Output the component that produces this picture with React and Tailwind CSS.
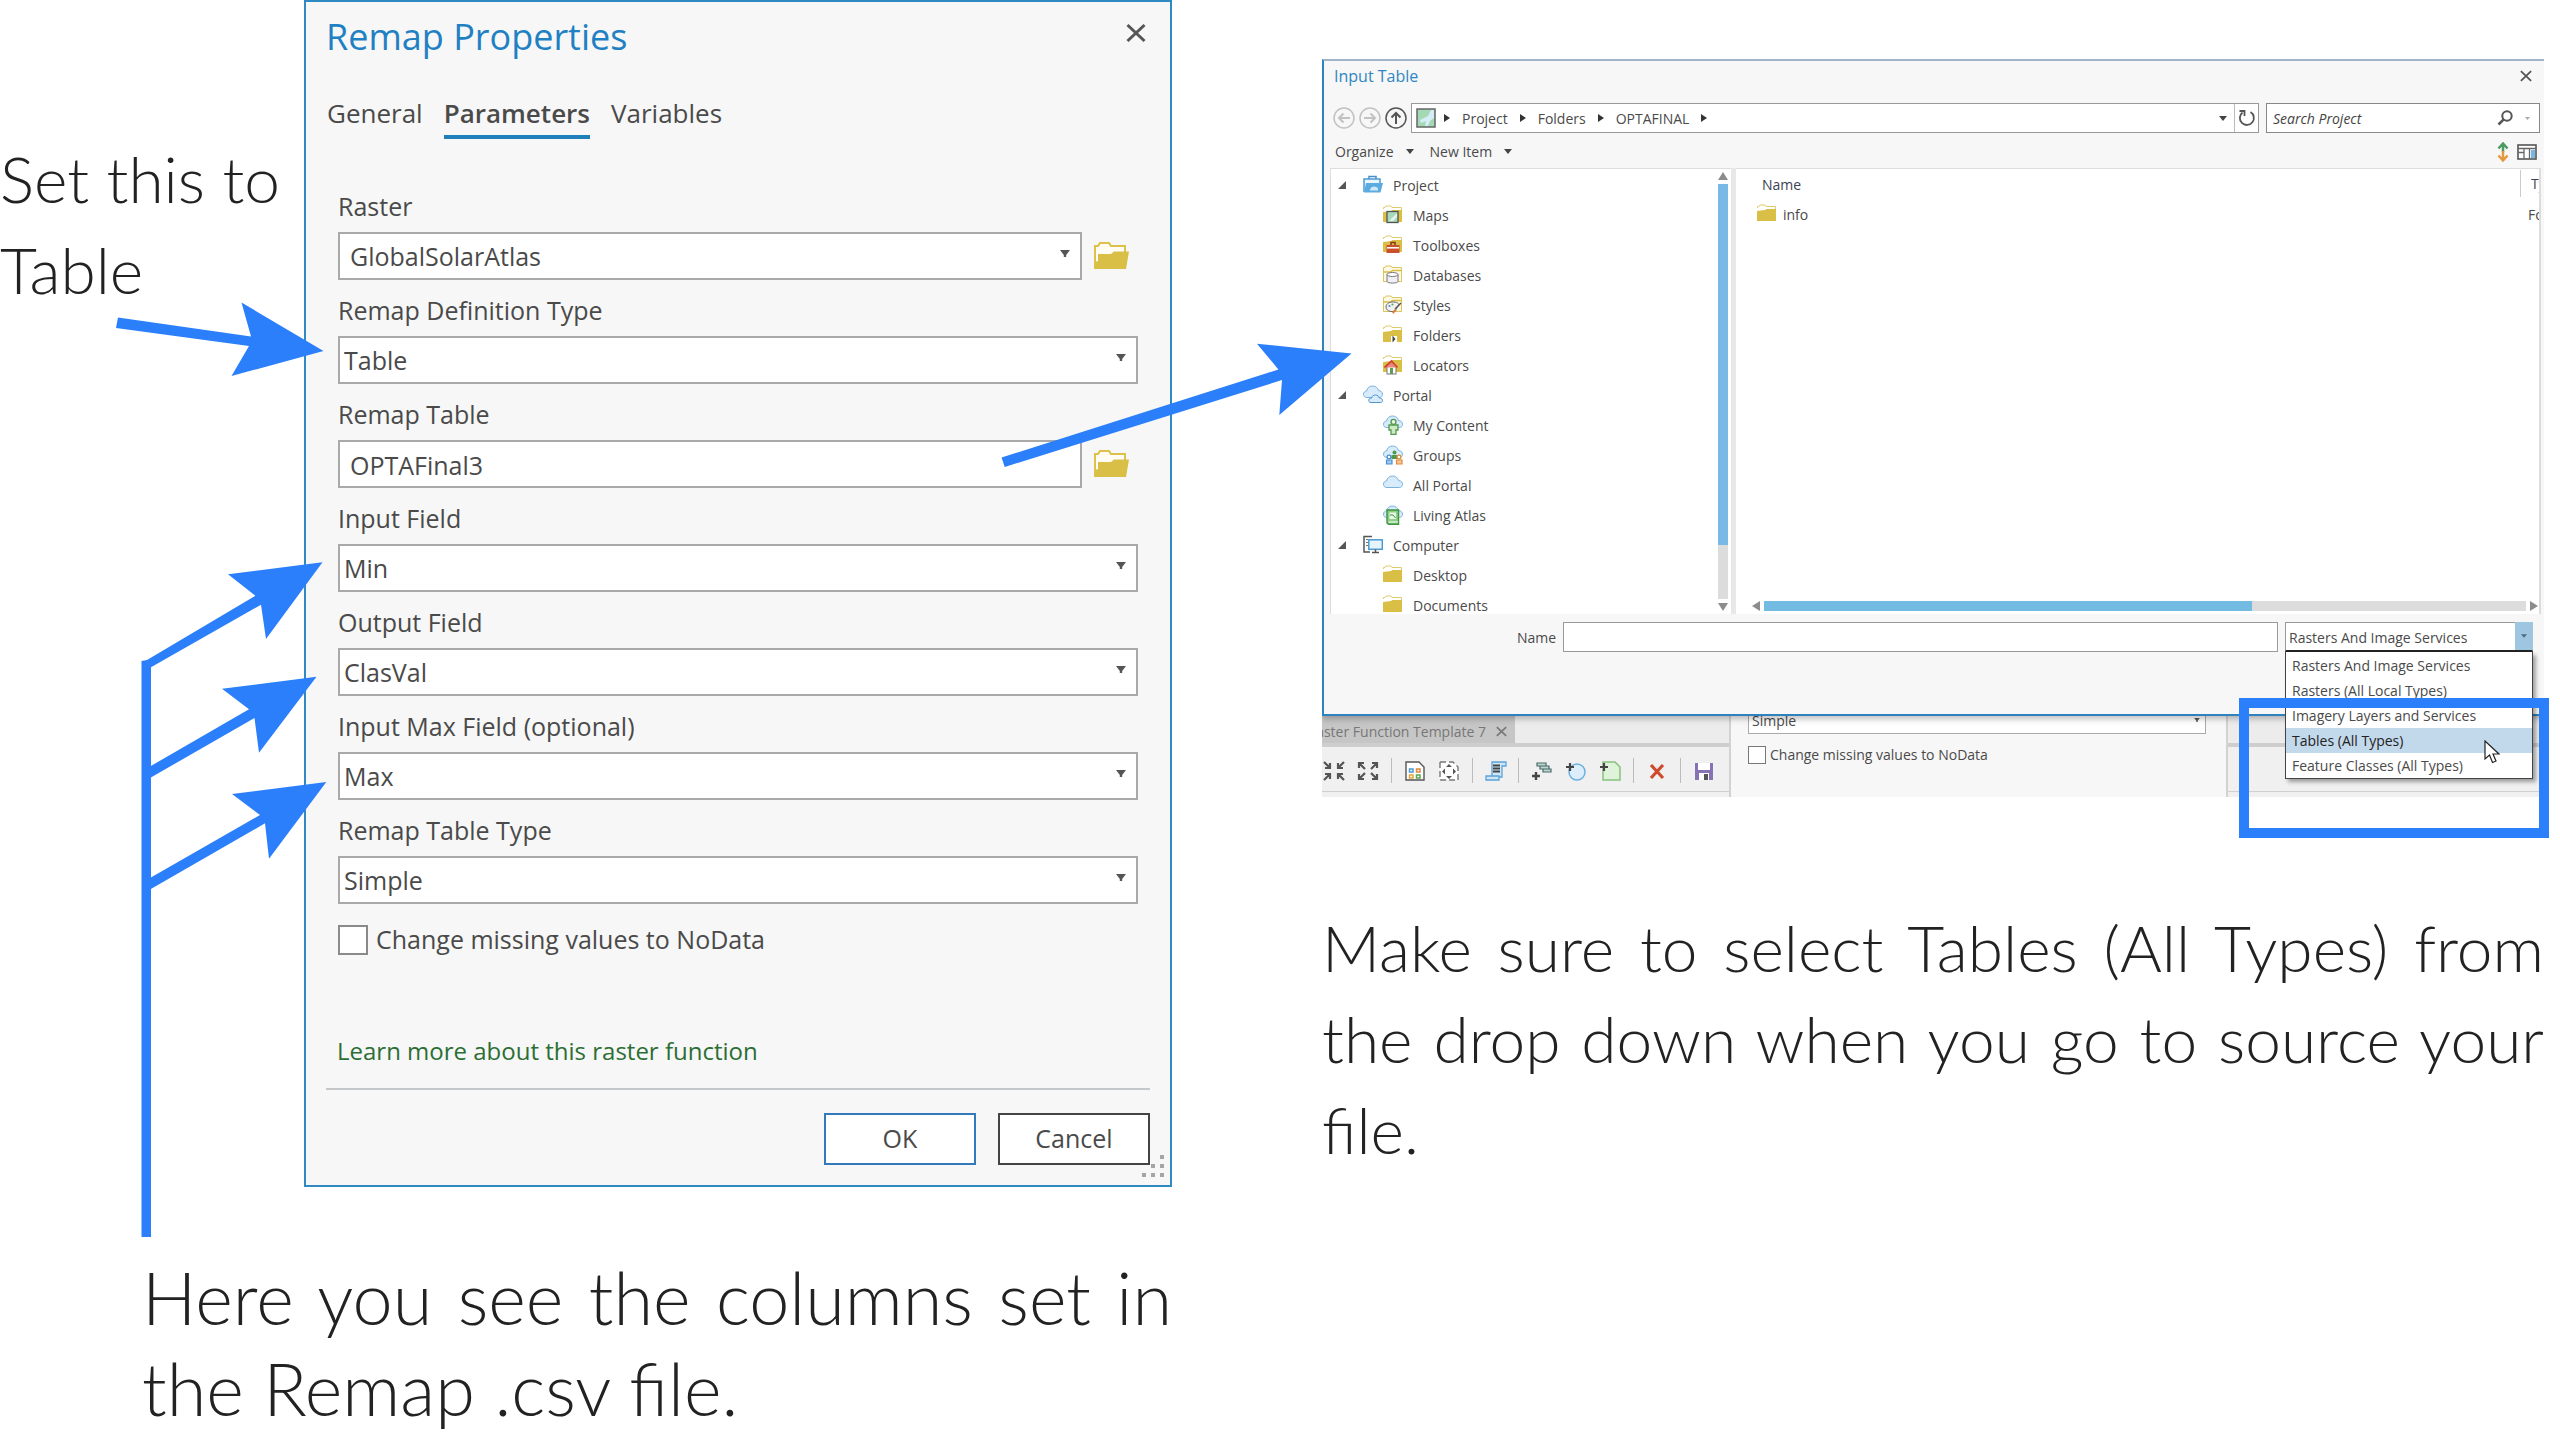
import { useState } from 'react'

const uiFont = "font-['Open_Sans','Noto_Sans',sans-serif]"
const noteFont = "font-['Lato','Open_Sans',sans-serif] font-light"

const DownTriangle = ({ className = '' }) => (
  <svg viewBox="0 0 10 7" aria-hidden="true" className={className}>
    <path d="M0 0H10L6.2 5V7H3.8V5Z" fill="currentColor" />
  </svg>
)

const Triangle = ({ points = '0,0 10,0 5,6', box = '0 0 10 6', className = '' }) => (
  <svg viewBox={box} aria-hidden="true" className={className}>
    <polygon points={points} fill="currentColor" />
  </svg>
)

const CloseMark = ({ className = '' }) => (
  <svg viewBox="0 0 20 20" aria-hidden="true" className={className}>
    <path d="M1.5 2L18.5 18M18.5 2L1.5 18" stroke="currentColor" strokeWidth="3" fill="none" />
  </svg>
)

const OpenFolder = () => (
  <svg viewBox="0 0 36 28" aria-hidden="true" className="h-7 w-9">
    <path d="M1 27V4H4L6 1H15L17 4H31V10" fill="#fffdf3" stroke="#dcc14a" strokeWidth="2" />
    <path d="M4 12H17L20 9.5H35L32 27H1V20L4 19Z" fill="#d9bf45" />
  </svg>
)

const FolderBase = () => (
  <>
    <path d="M0.5 4V2.5H2L3 1H8L9 2.5H18.5V5" fill="#fff" stroke="#e0cb6a" />
    <path d="M0 7L8 6L9.5 5H19V17H0Z" fill="#d9bf45" />
  </>
)

// folder with a pale face, used where a symbol covers it
const PaleFolder = () => (
  <>
    <path d="M0.5 16.5V2.5H2L3 1H8L9 2.5H18.5V16.5Z" fill="#fdf9e6" stroke="#dcc65c" />
    <path d="M0.5 7H8L9.5 5.5H18.5" fill="none" stroke="#d9bf45" strokeWidth="1.6" />
  </>
)

const CloudBase = () => (
  <path d="M4 12.5C1.5 12.5 0.5 11 0.5 9.2C0.5 7.2 2 6 3.6 6C4 3 6.5 1 9.5 1C12.5 1 15 3 15.5 5.6C18 5.6 19.5 7.2 19.5 9.3C19.5 11.3 18 12.5 16.5 12.5Z"
    fill="#d8ebfa" stroke="#79b2de" />
)

const iconShapes = {
  project: (
    <>
      <path d="M6 4V1.5H13V4" fill="none" stroke="#4a8fc4" strokeWidth="1.5" />
      <path d="M1 17V4H17V8" fill="#eaf5fd" stroke="#4a9bd4" strokeWidth="1.5" />
      <path d="M3 8H20L17.5 17.5H1Z" fill="#5aabe0" />
      <path d="M7 15C7 12 11 10.5 13 12C15 12 15.5 15 15 15.5H7Z" fill="#cfe8f8" />
    </>
  ),
  maps: (
    <>
      <FolderBase />
      <rect x="4" y="6.5" width="11" height="11" fill="#a9d9bd" stroke="#555" strokeWidth="1.3" />
      <path d="M6 16L14 8V12L10 16Z" fill="#e3f4ec" />
    </>
  ),
  toolboxes: (
    <>
      <FolderBase />
      <path d="M8 10V7.5H12V10" fill="none" stroke="#8a3520" strokeWidth="1.5" />
      <rect x="3.5" y="10" width="13" height="8" fill="#c9502f" />
      <path d="M4 12.8H16" stroke="#fff" strokeWidth="1.5" />
    </>
  ),
  databases: (
    <>
      <PaleFolder />
      <path d="M4 9.5V16.5C4 18.6 15 18.6 15 16.5V9.5" fill="#f0f0f4" stroke="#74747c" />
      <ellipse cx="9.5" cy="9.5" rx="5.5" ry="2" fill="#fff" stroke="#74747c" />
    </>
  ),
  styles: (
    <>
      <PaleFolder />
      <path d="M3 12C3 8.5 7 6.5 11 7C15 7 17 9.5 15 11.5C13 12.5 13.5 14 13 15.5C11 17.5 3 17 3 12Z" fill="#f2f2f2" stroke="#666" />
      <circle cx="6.5" cy="11" r="1.1" fill="#4a8fc4" />
      <circle cx="9.5" cy="9.5" r="1.1" fill="#6ba85a" />
      <path d="M18 8L12 14" stroke="#555" strokeWidth="1.5" />
      <path d="M9 17L12 14L13 15.5L10.5 19Z" fill="#d9803f" />
    </>
  ),
  folders: (
    <>
      <FolderBase />
      <rect x="8" y="11" width="6" height="7" fill="#fff" />
      <path d="M9.5 10.5L12.5 14L9.5 17.5Z" fill="#444" />
    </>
  ),
  locators: (
    <>
      <FolderBase />
      <rect x="4" y="11" width="9" height="8" fill="#fff" stroke="#777" />
      <path d="M1.5 12.5L8.5 6L14.5 12.5" fill="#e58a7a" stroke="#d0442f" strokeWidth="1.8" />
      <rect x="7" y="13" width="3" height="6" fill="#5b9c58" />
    </>
  ),
  portal: (
    <>
      <CloudBase />
      <path d="M8 17.5C6 17.5 5.5 16 5.8 15C6 13.5 7.5 13 8.5 13.2C9 11 10.5 10 12.5 10C14.5 10 16 11.5 16.3 13C18.5 13 19.5 14.5 19.5 15.5C19.5 17 18.5 17.5 17.5 17.5Z"
        fill="#d8ebfa" stroke="#4f96cf" />
    </>
  ),
  content: (
    <>
      <CloudBase />
      <circle cx="10.5" cy="6.8" r="2.5" fill="#eaf6e6" stroke="#4f9a4a" strokeWidth="1.3" />
      <path d="M6 10H15V15H13V19.3H8V15H6Z" fill="#cfe8c8" stroke="#4f9a4a" strokeWidth="1.3" />
    </>
  ),
  groups: (
    <>
      <CloudBase />
      <circle cx="11.5" cy="7.5" r="2" fill="#4f9a4a" />
      <path d="M8.5 10H14.5V14H8.5Z" fill="#4f9a4a" />
      <circle cx="6" cy="12" r="1.9" fill="#fff" stroke="#4a8fd0" strokeWidth="1.3" />
      <path d="M3.5 15H9V19H3.5Z" fill="#9cc8ef" stroke="#4a8fd0" strokeWidth="1.2" />
      <circle cx="16" cy="12" r="1.9" fill="#fff" stroke="#e08a3c" strokeWidth="1.3" />
      <path d="M13.5 15H19V19H13.5Z" fill="#f5c79b" stroke="#e08a3c" strokeWidth="1.2" />
    </>
  ),
  cloud: <CloudBase />,
  atlas: (
    <>
      <CloudBase />
      <path d="M4 5H15.5V19.3H5.5L4 18Z" fill="#8fce86" stroke="#3f9440" strokeWidth="1.4" />
      <rect x="6.5" y="7.5" width="6.5" height="6.5" fill="#e9f7e6" />
      <path d="M7 10H10L12.5 13" stroke="#3f9440" fill="none" />
      <path d="M5.5 17H15" stroke="#fff" />
    </>
  ),
  computer: (
    <>
      <path d="M9 1.5H1V17H7" fill="none" stroke="#555" strokeWidth="1.5" />
      <path d="M3 4.5H5M3 7.5H5M3 10.5H5" stroke="#777" />
      <rect x="5.8" y="4.8" width="13.5" height="9.5" fill="#e8f4fc" stroke="#4a9bd4" strokeWidth="1.5" />
      <path d="M9 17.5H16M12.5 14.5V17.5" stroke="#555" strokeWidth="1.5" />
    </>
  ),
  folder: <FolderBase />,
}

const ItemIcon = ({ name }) => (
  <svg viewBox="0 0 20 20" aria-hidden="true" className="size-5 shrink-0">{iconShapes[name]}</svg>
)

const fields = [
  { id: 'raster', label: 'Raster', value: 'GlobalSolarAtlas', kind: 'select', browse: true },
  { id: 'definition', label: 'Remap Definition Type', value: 'Table', kind: 'select' },
  { id: 'table', label: 'Remap Table', value: 'OPTAFinal3', kind: 'text', browse: true },
  { id: 'min', label: 'Input Field', value: 'Min', kind: 'select' },
  { id: 'output', label: 'Output Field', value: 'ClasVal', kind: 'select' },
  { id: 'max', label: 'Input Max Field (optional)', value: 'Max', kind: 'select' },
  { id: 'type', label: 'Remap Table Type', value: 'Simple', kind: 'select' },
]

const tree = [
  { label: 'Project', icon: 'project', items: [['Maps', 'maps'], ['Toolboxes', 'toolboxes'], ['Databases', 'databases'], ['Styles', 'styles'], ['Folders', 'folders'], ['Locators', 'locators']] },
  { label: 'Portal', icon: 'portal', items: [['My Content', 'content'], ['Groups', 'groups'], ['All Portal', 'cloud'], ['Living Atlas', 'atlas']] },
  { label: 'Computer', icon: 'computer', items: [['Desktop', 'folder'], ['Documents', 'folder']] },
]

const fileTypes = [
  'Rasters And Image Services',
  'Rasters (All Local Types)',
  'Imagery Layers and Services',
  'Tables (All Types)',
  'Feature Classes (All Types)',
]

const Field = ({ id, label, value, kind, browse }) => (
  <div>
    <label htmlFor={id} className="block pt-[6px] pb-[2px] leading-[48px]">{label}</label>
    <div className="flex items-center gap-3">
      <div className="relative flex-1">
        {kind === 'select' ? (
          <>
            <select id={id} defaultValue={value}
              className={`${browse ? 'pl-[10px]' : 'pl-1'} block h-12 w-full appearance-none border-2 border-[#a9a9a9] bg-white pt-[2px]`}>
              <option>{value}</option>
            </select>
            <DownTriangle className="pointer-events-none absolute top-[18px] right-3 h-[7px] w-[10px] text-[#555]" />
          </>
        ) : (
          <input id={id} defaultValue={value} className="block h-12 w-full border-2 border-[#a9a9a9] bg-white pt-[2px] pl-[10px]" />
        )}
      </div>
      {browse && (
        <button type="button" aria-label={`Browse ${label}`} className="mr-2">
          <OpenFolder />
        </button>
      )}
    </div>
  </div>
)

const RemapDialog = () => {
  const [tab, setTab] = useState('Parameters')

  return (
    <section className={`${uiFont} border-2 border-[#2f89c2] bg-[#f7f7f7] px-5 pb-5 text-[25px] text-[#4a4a4a]`}>
      <header className="flex h-[70px] items-center justify-between pr-1">
        <h2 className="text-[36px] text-[#1f80c3]">Remap Properties</h2>
        <button type="button" aria-label="Close" className="pb-2 text-[#555]"><CloseMark className="size-5" /></button>
      </header>

      <nav className="mt-[19px] flex gap-[21px] pl-px text-[26px] leading-[44px]">
        {['General', 'Parameters', 'Variables'].map(t => (
          <button key={t} type="button" onClick={() => setTab(t)}
            className={tab === t ? 'border-b-4 border-[#1f7fb8] font-semibold' : 'border-b-4 border-transparent'}>
            {t}
          </button>
        ))}
      </nav>

      <div className="mt-[37px] px-3">
        {fields.map(f => <Field key={f.id} {...f} />)}
        <div className="mt-[21px] flex h-[30px] items-center gap-2">
          <input id="nodata" type="checkbox" className="size-[30px] appearance-none border-2 border-[#8a8a8a] bg-white" />
          <label htmlFor="nodata">Change missing values to NoData</label>
        </div>
        <a href="#help" className="mt-20 -ml-px block text-[24px] leading-8 text-[#2c6e34]">Learn more about this raster function</a>
      </div>

      <footer className="relative mt-[21px] flex justify-end gap-[22px] border-t-2 border-[#c4c8ca] pt-[23px]">
        <button type="button" className="h-[52px] w-[152px] border-2 border-[#3579bd] bg-white">OK</button>
        <button type="button" className="h-[52px] w-[152px] border-2 border-[#444] bg-white">Cancel</button>
        <svg viewBox="0 0 24 24" aria-hidden="true" className="absolute -right-4 -bottom-[14px] size-6">
          <path d="M18 0h4v4h-4zM9 9h4v4h-4zM18 9h4v4h-4zM0 18h4v4h-4zM9 18h4v4h-4zM18 18h4v4h-4z" fill="#a5a5a5" />
        </svg>
      </footer>
    </section>
  )
}

const RoundArrow = ({ label, d, className }) => (
  <button type="button" aria-label={label} className={className}>
    <svg viewBox="0 0 22 22" aria-hidden="true" className="size-[22px]">
      <circle cx="11" cy="11" r="10" fill="none" stroke="currentColor" strokeWidth="1.5" />
      <path d={d} fill="none" stroke="currentColor" strokeWidth="2" />
    </svg>
  </button>
)

const RightMark = () => (
  <Triangle points="0,0 6,4 0,8" box="0 0 6 8" className="h-2 w-[6px] text-[#333]" />
)

const AddressRow = () => (
  <div className="mt-[10px] flex h-[30px] items-center gap-[7px] pr-1 pl-[9px]">
    <div className="flex min-w-0 flex-1 items-center gap-1">
      <RoundArrow label="Back" d="M17 11H6M10.5 6.5L6 11L10.5 15.5" className="text-[#c2c2c2]" />
      <RoundArrow label="Forward" d="M5 11H16M11.5 6.5L16 11L11.5 15.5" className="text-[#c2c2c2]" />
      <RoundArrow label="Up" d="M11 17V6M6.5 10.5L11 6L15.5 10.5" className="text-[#555]" />
      <div className="flex h-[30px] flex-1 items-center border border-[#999] bg-white pl-1">
        <svg viewBox="0 0 20 20" aria-hidden="true" className="mr-2 size-5">
          <rect x="1" y="1" width="18" height="18" fill="#a5d8b4" stroke="#666" strokeWidth="1.5" />
          <path d="M18 2V10L14 13L12 18H9L10 13L5 15L4 12L12 8L15 2Z" fill="#d5edf6" />
        </svg>
        <div className="flex flex-1 items-center gap-3">
          <RightMark />
          {['Project', 'Folders', 'OPTAFINAL'].map(p => (
            <div key={p} className="flex items-center gap-3">
              <a href="#path">{p}</a>
              <RightMark />
            </div>
          ))}
        </div>
        <button type="button" aria-label="Previous locations" className="mr-[7px]">
          <Triangle className="h-[5px] w-2 text-[#444]" />
        </button>
        <button type="button" aria-label="Refresh" className="flex h-full w-6 items-center justify-center border-l border-[#bbb] text-[#555]">
          <svg viewBox="0 0 18 18" aria-hidden="true" className="size-[18px]">
            <path d="M12.5 3A7 7 0 1 1 4.5 3.5" fill="none" stroke="currentColor" strokeWidth="1.8" />
            <path d="M1.5 2H6.5V7" fill="none" stroke="currentColor" strokeWidth="1.8" />
          </svg>
        </button>
      </div>
    </div>
    <div className="flex h-[30px] w-[274px] items-center border border-[#888] bg-white pr-[9px] pl-[6px]">
      <input type="search" aria-label="Search Project" placeholder="Search Project"
        className="min-w-0 flex-1 italic outline-none placeholder:text-[#444]" />
      <svg viewBox="0 0 16 16" aria-hidden="true" className="mr-3 size-4 text-[#555]">
        <circle cx="10" cy="6" r="4.7" fill="none" stroke="currentColor" strokeWidth="2" />
        <path d="M6.7 9.3L1.5 14.5" stroke="currentColor" strokeWidth="2.5" />
      </svg>
      <Triangle className="h-[3px] w-[5px] text-[#aaa]" />
    </div>
  </div>
)

const MenuRow = () => (
  <div className="flex h-[35px] items-center justify-between pt-[2px] pr-[7px] pl-[11px]">
    <div className="flex items-center gap-4">
      {['Organize', 'New Item'].map(m => (
        <button key={m} type="button" className="flex items-center gap-3">
          {m}
          <Triangle className="h-[5px] w-2 text-[#444]" />
        </button>
      ))}
    </div>
    <div className="flex items-center gap-2">
      <button type="button" aria-label="Sort">
        <svg viewBox="0 0 12 20" aria-hidden="true" className="h-5 w-3">
          <path d="M6 10V2M1.5 6.5L6 1.5L10.5 6.5" fill="none" stroke="#4c9a62" strokeWidth="2.5" />
          <path d="M6 9V18M1.5 13.5L6 18.5L10.5 13.5" fill="none" stroke="#e39a3d" strokeWidth="2.5" />
        </svg>
      </button>
      <button type="button" aria-label="Details panel">
        <svg viewBox="0 0 20 16" aria-hidden="true" className="h-4 w-5">
          <rect x="1" y="1" width="18" height="14" fill="#fff" stroke="#555" strokeWidth="1.6" />
          <path d="M1 4.5H19M1 8.5H7M7 4.5V15M12.5 4.5V15" stroke="#666" strokeWidth="1.3" />
          <path d="M14 6H18V14H14Z" fill="#76b8e2" />
        </svg>
      </button>
    </div>
  </div>
)

const TreePane = () => (
  <div className="flex w-[401px] shrink-0 overflow-hidden border-t border-l border-[#ddd] bg-white">
    <ul className="flex-1 pt-px">
      {tree.map(group => (
        <li key={group.label}>
          <div className="flex h-[30px] items-center pl-[7px]">
            <Triangle points="8,0 8,8 0,8" box="0 0 8 8" className="mr-[17px] size-2 text-[#555]" />
            <ItemIcon name={group.icon} />
            <span className="ml-[10px]">{group.label}</span>
          </div>
          <ul>
            {group.items.map(([label, icon]) => (
              <li key={label} className="flex h-[30px] items-center pl-[52px]">
                <ItemIcon name={icon} />
                <span className="ml-[10px]">{label}</span>
              </li>
            ))}
          </ul>
        </li>
      ))}
    </ul>
    <div className="mr-[3px] flex w-[10px] flex-col items-center gap-1 py-[3px]">
      <Triangle points="0,8 5,0 10,8" box="0 0 10 8" className="h-2 w-[10px] shrink-0 text-[#8c8c8c]" />
      <div className="w-full flex-1 bg-[#dcdcdc]">
        <div className="h-[87%] bg-[#78b9e6]" />
      </div>
      <Triangle points="0,0 5,8 10,0" box="0 0 10 8" className="h-2 w-[10px] shrink-0 text-[#8c8c8c]" />
    </div>
  </div>
)

const FilePane = () => (
  <div className="flex min-w-0 flex-1 flex-col overflow-hidden border-t border-r-2 border-[#ddd] bg-white">
    <table className="w-[calc(100%+80px)] table-fixed text-left">
      <thead>
        <tr className="h-[30px]">
          <th className="pl-[26px] font-normal text-[#3b4252]">Name</th>
          <th className="w-[99px] p-0 font-normal text-[#3b4252]">
            <div className="-mt-px h-[27px] border-l border-[#ccc] pl-[10px] leading-[27px]">Type</div>
          </th>
        </tr>
      </thead>
      <tbody>
        <tr className="h-[30px]">
          <td className="p-0">
            <div className="flex items-center gap-[6px] pl-[21px]"><ItemIcon name="folder" />info</div>
          </td>
          <td className="p-0 pl-2">Folder</td>
        </tr>
      </tbody>
    </table>
    <div className="mt-auto flex items-center gap-1 pr-px pb-[3px] pl-4">
      <Triangle points="8,0 0,5 8,10" box="0 0 8 10" className="h-[10px] w-2 text-[#8c8c8c]" />
      <div className="h-[10px] flex-1 bg-[#dcdcdc]">
        <div className="h-full w-[64%] bg-[#74bbe4]" />
      </div>
      <Triangle points="0,0 8,5 0,10" box="0 0 8 10" className="h-[10px] w-2 text-[#8c8c8c]" />
    </div>
  </div>
)

const Pointer = () => (
  <svg viewBox="0 0 16 24" aria-hidden="true" className="absolute right-[32px] bottom-[14px] h-6 w-4">
    <path d="M1 1V19L5.5 15L8.5 22.5L12 21L9 14H15Z" fill="#fff" stroke="#222" strokeWidth="1.2" />
  </svg>
)

const TypePicker = () => {
  const [active, setActive] = useState('Tables (All Types)')

  return (
    <div className="relative w-[248px]">
      <select aria-label="File type" defaultValue={fileTypes[0]}
        className="block h-[30px] w-full appearance-none border border-b-2 border-[#999] border-b-[#222] bg-white pt-px pl-[3px]">
        {fileTypes.map(t => <option key={t}>{t}</option>)}
      </select>
      <span className="pointer-events-none absolute top-0 right-0 flex h-7 w-[18px] items-center justify-center bg-[#9fc6e1]">
        <Triangle className="h-1 w-[6px] text-[#4d6a80]" />
      </span>
      <ul role="listbox" aria-label="File types"
        className="absolute top-[30px] left-0 w-full border border-t-0 border-[#444] bg-white pt-px shadow-[3px_3px_4px_rgba(0,0,0,0.35)]">
        {fileTypes.map(t => (
          <li key={t} role="option" aria-selected={t === active} onMouseEnter={() => setActive(t)}
            className={t === active ? 'bg-[#c2d9ec] pl-[6px] leading-[25px] text-[#222]' : 'pl-[6px] leading-[25px]'}>
            {t}
          </li>
        ))}
        <Pointer />
      </ul>
    </div>
  )
}

const InputTableDialog = () => (
  <section className="relative z-10 border-2 border-r-0 border-[#2f82bd] border-t-[#9fb4c8] bg-[#f7f7f7] pb-[62px] shadow-[0_3px_6px_rgba(0,0,0,0.25)]">
    <header className="flex h-[30px] items-center justify-between pr-3 pl-[10px]">
      <h2 className="text-[16px] text-[#2f86c5]">Input Table</h2>
      <button type="button" aria-label="Close" className="text-[#555]"><CloseMark className="size-3" /></button>
    </header>
    <div className="pt-[2px]">
      <AddressRow />
    </div>
    <MenuRow />
    <div className="mr-[3px] ml-[6px] flex h-[446px] gap-[5px] bg-[#e8e8e8]">
      <TreePane />
      <FilePane />
    </div>
    <div className="mt-2 flex items-center gap-[7px] pr-[11px] pl-[193px]">
      <label htmlFor="name">Name</label>
      <input id="name" className="h-[30px] min-w-0 flex-1 border border-[#999] bg-white" />
      <TypePicker />
    </div>
  </section>
)

const toolGroups = [
  [
    ['Collapse', <path key="a" d="M1 1L7 7M7 2V7H2M21 1L15 7M15 2V7H20M1 19L7 13M2 13H7V18M21 19L15 13M20 13H15V18" stroke="#555" strokeWidth="2.2" fill="none" />],
    ['Expand', <path key="a" d="M8 8L2 2M2 7V2H7M14 8L20 2M15 2H20V7M8 12L2 18M2 13V18H7M14 12L20 18M15 18H20V13" stroke="#555" strokeWidth="2.2" fill="none" />],
  ],
  [
    ['Properties', (
      <g key="a" fill="none">
        <path d="M2 1H15L20 6V19H2Z" fill="#fff" stroke="#555" strokeWidth="1.4" />
        <path d="M5.5 8H9V11H5.5Z" stroke="#4a9bd4" strokeWidth="1.5" />
        <path d="M12.5 8H16V11H12.5Z" stroke="#e08a3c" strokeWidth="1.5" />
        <path d="M5.5 14H9V17H5.5Z" stroke="#e0a83c" strokeWidth="1.5" />
        <path d="M12.5 14H16V17H12.5Z" stroke="#5aa850" strokeWidth="1.5" />
      </g>
    )],
    ['Fit', (
      <g key="a" fill="none">
        <path d="M2 1H15L20 6V19H2Z" fill="#fff" stroke="#777" strokeWidth="1.4" strokeDasharray="6 3" />
        <path d="M11 3L14 6H8ZM11 18L14 15H8ZM4 10.5L7 7.5V13.5ZM18 10.5L15 7.5V13.5Z" fill="#555" />
      </g>
    )],
  ],
  [
    ['Script', (
      <g key="a">
        <path d="M7 1H21V5H17V16H7Z" fill="#cfe6f7" stroke="#5ba3d8" strokeWidth="1.3" />
        <path d="M1 15H14V19H1Z" fill="#cfe6f7" stroke="#5ba3d8" strokeWidth="1.3" />
        <path d="M8 4.5H15M8 7.5H15M8 10.5H15" stroke="#444" strokeWidth="1.8" />
      </g>
    )],
  ],
  [
    ['Add raster', (
      <g key="a">
        <path d="M6 2H15V5H6ZM9 5H18V8H9ZM12 8H20V11H12Z" fill="#b9d6d0" stroke="#4c6a66" strokeWidth="1.2" />
        <path d="M5 11V19M1 15H9" stroke="#444" strokeWidth="2.4" />
      </g>
    )],
    ['Add function', (
      <g key="a">
        <circle cx="12" cy="11" r="8" fill="#dcedfb" stroke="#6cb0e0" strokeWidth="1.5" />
        <path d="M5 2V10M1 6H9" stroke="#444" strokeWidth="2.2" />
      </g>
    )],
    ['Add variable', (
      <g key="a">
        <path d="M4 1H16L21 6V19H4Z" fill="#dff2da" stroke="#86c27c" strokeWidth="1.5" />
        <path d="M5 2V10M1 6H9" stroke="#444" strokeWidth="2.2" />
      </g>
    )],
  ],
  [
    ['Delete', <path key="a" d="M5 4L17 17M17 4L5 17" stroke="#cf4a2c" strokeWidth="3.2" />],
  ],
  [
    ['Save', (
      <g key="a">
        <path d="M2 2H20V19H2Z" fill="#8672b4" />
        <path d="M5 2H17V9H5Z" fill="#fff" />
        <path d="M6 12H16V19H6Z" fill="#fff" />
        <path d="M11 13H15V19H11Z" fill="#555" />
      </g>
    )],
  ],
]

const Workspace = () => (
  <div className="flex h-[81px] overflow-hidden bg-[#f0f0f0]">
    <div className="flex w-[407px] shrink-0 flex-col">
      <div className="flex h-[31px] border-b-4 border-[#cecece] bg-[#ececec]">
        <div className="flex w-[193px] items-center justify-end gap-[10px] overflow-hidden bg-[#c6c6c6] pt-1 pr-2 whitespace-nowrap text-[#777]">
          Raster Function Template 7
          <button type="button" aria-label="Close tab"><CloseMark className="size-[11px]" /></button>
        </div>
      </div>
      <div className="flex h-[45px] items-center justify-between border-b border-[#d0d0d0] pt-[3px] pr-[14px]">
        {toolGroups.map((group, i) => (
          <div key={i} className={i ? 'flex h-[25px] items-center gap-3 border-l border-[#bbb] pl-3' : 'flex items-center gap-3 pl-px'}>
            {group.map(([label, shape]) => (
              <button key={label} type="button" aria-label={label}>
                <svg viewBox="0 0 22 20" aria-hidden="true" className="h-5 w-[22px]">{shape}</svg>
              </button>
            ))}
          </div>
        ))}
      </div>
    </div>
    <div className="flex-1 border-x-2 border-[#d2d2d2] bg-[#f7f7f7] pr-5 pl-[17px]">
      <div className="relative -mt-3">
        <select aria-label="Remap Table Type" className="block h-[30px] w-full appearance-none border border-[#aaa] bg-white pt-[2px] pl-[3px]">
          <option>Simple</option>
        </select>
        <DownTriangle className="pointer-events-none absolute top-[14px] right-[6px] h-1 w-[6px] text-[#555]" />
      </div>
      <div className="mt-[10px] flex items-center gap-1">
        <input id="nodata-back" type="checkbox" className="size-[18px] appearance-none border border-[#777] bg-white" />
        <label htmlFor="nodata-back">Change missing values to NoData</label>
      </div>
    </div>
    <div className="w-[316px] shrink-0">
      <div className="h-[31px] border-b-4 border-[#cecece] bg-[#ececec]" />
      <div className="h-[45px] border-b border-[#d0d0d0]" />
    </div>
  </div>
)

// Arrows and the highlight box share one drawing over the whole sheet.
const Callouts = () => (
  <svg viewBox="0 0 2560 1446" preserveAspectRatio="none" aria-hidden="true"
    className="pointer-events-none absolute inset-0 z-20 size-full" fill="#2b7ffa">
    <polygon points="118,317.5 251,336.5 241.5,302.5 323.5,351 231.5,376 249,346 116,328" />
    <polygon points="1001.6,457.5 1278.4,369.5 1257,343.7 1351.5,353.5 1279.3,415 1282,380 1004.7,467" />
    <polygon points="141.5,661 147,660 255.4,595.7 228,574.3 322.5,562.3 266,639 261,604.7 151,667.3 151,1237 141.5,1237" />
    <polygon points="150,766.5 249,709.3 222,688.7 316.5,676.7 259,752.7 254.5,718 150,778" />
    <polygon points="150,878 260,815 232,794 326.3,782 269,858.7 265,823.3 150,889.5" />
    <rect x="2244" y="703" width="300" height="130" fill="none" stroke="#2b7ffa" strokeWidth="10" />
  </svg>
)

export default function App() {
  return (
    <main className="relative grid min-h-screen grid-cols-[1172fr_1222fr] items-start gap-x-[150px] overflow-hidden bg-white pr-4 text-[#222]">
      <div className="min-w-0">
        <div className="grid grid-cols-[304fr_868fr]">
          <p className={`${noteFont} pt-[133px] text-[64px] leading-[91px]`}>Set this to<br />Table</p>
          <RemapDialog />
        </div>
        <p className={`${noteFont} mt-[65px] pl-[142px] text-[72px] leading-[91px]`}>
          <span className="block text-justify [text-align-last:justify]">Here you see the columns set in</span>
          <span className="block">the Remap .csv file.</span>
        </p>
      </div>

      <div className="min-w-0 pt-[59px]">
        <div className={`${uiFont} overflow-hidden text-[14px] text-[#4a4a4a]`}>
          <InputTableDialog />
          <Workspace />
        </div>
        <p className={`${noteFont} mt-[105px] text-justify text-[64px] leading-[91px]`}>
          Make sure to select Tables (All Types) from the drop down when you go to source your file.
        </p>
      </div>

      <Callouts />
    </main>
  )
}
